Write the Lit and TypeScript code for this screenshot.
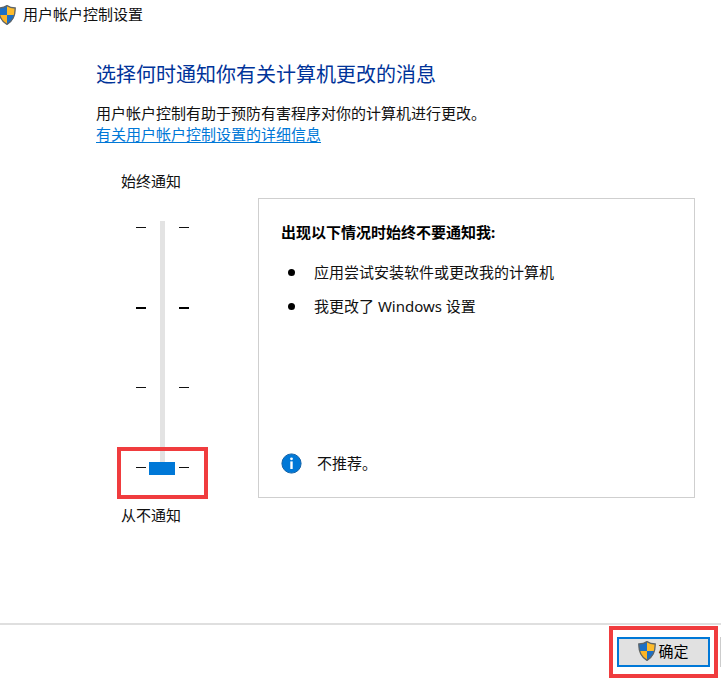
import { LitElement, html, css, svg } from "lit";
import { customElement, property, state } from "lit/decorators.js";

@customElement("uac-shield")
export class UacShield extends LitElement {
  static styles = css`
    :host {
      display: block;
      flex: none;
      width: 18px;
      height: 20px;
    }
    svg {
      display: block;
    }
  `;

  render() {
    const outline =
      "M9 .6C7 2 4.200 2.900 .8 3c-.2 7.200 1.400 12.600 8.200 16.400C15.800 15.600 17.400 10.200 17.200 3 13.800 2.900 11 2 9 .6Z";
    return html`<svg width="18" height="20" viewBox="0 0 18 20" aria-hidden="true">
      <defs><clipPath id="shield"><path d=${outline} /></clipPath></defs>
      ${svg`<g clip-path="url(#shield)">
        <rect width="9" height="10" fill="#1c6fc4" />
        <rect x="9" width="9" height="10" fill="#fdbb2c" />
        <rect y="10" width="9" height="10" fill="#fdb424" />
        <rect x="9" y="10" width="9" height="10" fill="#1c6fc4" />
      </g>
      <path d=${outline} fill="none" stroke="#5d6468" stroke-width="1.300" />`}
    </svg>`;
  }
}

@customElement("level-slider")
export class LevelSlider extends LitElement {
  @property({ type: Number }) value = 0;

  static styles = css`
    :host {
      display: block;
    }
    .label {
      display: block;
      padding-left: 25px;
      line-height: 21px;
    }
    .scale {
      display: flex;
      gap: 3px;
      height: 254px;
      margin: 29px 0 30px;
      padding-left: 40px;
    }
    .ticks {
      display: flex;
      flex-direction: column;
      justify-content: space-between;
      box-sizing: border-box;
      width: 10px;
      padding: 6px 0 7px;
    }
    .ticks.after {
      margin-left: 1px;
    }
    .tick {
      height: 1px;
      background: #111;
    }
    .tick.strong {
      height: 2px;
      background: #000;
    }
    .range {
      appearance: none;
      writing-mode: vertical-lr;
      direction: rtl;
      width: 26px;
      height: 254px;
      margin: 0;
      background: linear-gradient(#e3e3e3, #e3e3e3) center / 5px 100% no-repeat;
      outline: none;
    }
    .range::-webkit-slider-thumb {
      appearance: none;
      width: 26px;
      height: 13px;
      border: 0;
      border-radius: 0;
      background: #0078d7;
    }
  `;

  private ticks(side: string) {
    return html`<div class="ticks ${side}">
      <span class="tick"></span><span class="tick strong"></span>
      <span class="tick"></span><span class="tick"></span>
    </div>`;
  }

  private onInput(event: Event) {
    this.value = Number((event.target as HTMLInputElement).value);
  }

  render() {
    return html`
      <label class="label" for="level">始终通知</label>
      <div class="scale">
        ${this.ticks("before")}
        <input class="range" id="level" type="range" min="0" max="3" step="1"
          .value=${String(this.value)} @input=${this.onInput} />
        ${this.ticks("after")}
      </div>
      <span class="label">从不通知</span>
    `;
  }
}

@customElement("app-root")
export class AppRoot extends LitElement {
  @state() private conditions = ["应用尝试安装软件或更改我的计算机", "我更改了 Windows 设置"];

  static styles = css`
    :host {
      display: flex;
      flex-direction: column;
      min-height: 100vh;
      overflow-x: hidden;
      background: #fff;
      color: #111;
      font: 15px/21px "Noto Sans", "Noto Sans CJK SC", sans-serif;
    }
    .titlebar {
      display: flex;
      align-items: center;
      gap: 7px;
      height: 29px;
      margin-left: -2px;
    }
    main {
      flex: 1;
      padding: 32px 26px 24px 96px;
    }
    h1 {
      margin: 0 0 14px;
      color: #003399;
      font-size: 20px;
      font-weight: 400;
      line-height: 28px;
    }
    p {
      margin: 0;
    }
    .link {
      color: #0078d7;
      text-underline-offset: 2px;
    }
    .settings {
      display: grid;
      grid-template-columns: 162px 1fr;
      margin-top: 26px;
    }
    .level {
      position: relative;
    }
    .level-mark {
      position: absolute;
      left: 21px;
      top: 276px;
      box-sizing: border-box;
      width: 91px;
      height: 52px;
      border: 4px solid #f03c3e;
      pointer-events: none;
    }
    .panel {
      display: flex;
      flex-direction: column;
      margin: 27px 0 28px;
      padding: 23px 22px;
      border: 1px solid #cfcfcf;
    }
    h2 {
      margin: 0 0 19px;
      color: #000;
      font-size: 15px;
      font-weight: 700;
      line-height: 21px;
    }
    ul {
      display: grid;
      gap: 13px;
      margin: 0;
      padding: 0;
      list-style: none;
    }
    li {
      display: flex;
      align-items: center;
      gap: 19px;
      padding-left: 7px;
    }
    .dot {
      width: 7px;
      height: 7px;
      border-radius: 50%;
      background: #000;
    }
    .advice {
      display: flex;
      align-items: center;
      gap: 15px;
      margin-top: auto;
    }
    footer {
      display: flex;
      align-items: center;
      justify-content: flex-end;
      gap: 2px;
      padding: 1px 0 5px;
      border-top: 2px solid #dfdfdf;
    }
    .confirm {
      padding: 7px 4px;
      border: 4px solid #f03c3e;
    }
    .ok {
      display: flex;
      align-items: center;
      justify-content: center;
      gap: 2px;
      box-sizing: border-box;
      width: 93px;
      height: 30px;
      padding: 0 0 2px;
      border: 2px solid #0078d7;
      background: #e1e1e1;
      color: #000;
      font: inherit;
    }
    .edge {
      width: 1px;
      height: 30px;
      background: #cccccc;
    }
  `;

  render() {
    return html`
      <header class="titlebar"><uac-shield></uac-shield><span>用户帐户控制设置</span></header>
      <main>
        <h1>选择何时通知你有关计算机更改的消息</h1>
        <p>用户帐户控制有助于预防有害程序对你的计算机进行更改。</p>
        <p><a class="link" href="#details">有关用户帐户控制设置的详细信息</a></p>
        <div class="settings">
          <div class="level">
            <level-slider .value=${0}></level-slider>
            <div class="level-mark"></div>
          </div>
          <section class="panel">
            <h2>出现以下情况时始终不要通知我:</h2>
            <ul>
              ${this.conditions.map((text) => html`<li><span class="dot"></span><span>${text}</span></li>`)}
            </ul>
            <div class="advice">
              <svg width="21" height="21" viewBox="0 0 21 21" aria-hidden="true">
                <circle cx="10.500" cy="10.500" r="9.600" fill="#0078d7" stroke="#1664a8" />
                <circle cx="10.500" cy="5.800" r="1.400" fill="#fff" />
                <rect x="9.300" y="8.400" width="2.400" height="7.600" fill="#fff" />
              </svg>
              <span>不推荐。</span>
            </div>
          </section>
        </div>
      </main>
      <footer>
        <div class="confirm">
          <button class="ok" type="button"><uac-shield></uac-shield>确定</button>
        </div>
        <span class="edge"></span>
      </footer>
    `;
  }
}
